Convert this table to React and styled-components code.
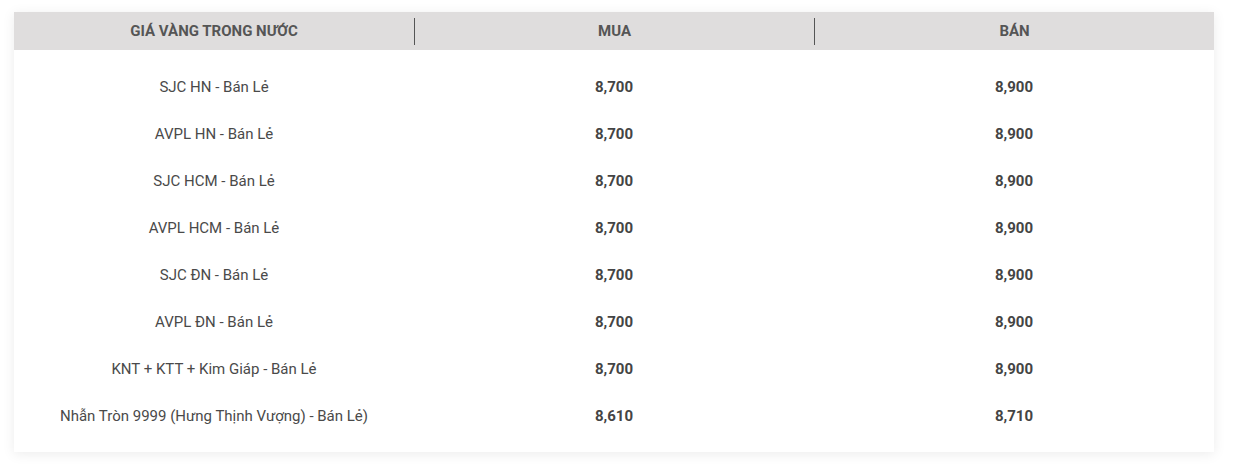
import styled, { createGlobalStyle } from 'styled-components';

const GlobalStyle = createGlobalStyle`
  body {
    margin: 0;
    background: #fff;
    font-family: Roboto, "Liberation Sans", Arial, sans-serif;
  }
`;

const rows = [
  { name: 'SJC HN - Bán Lẻ', buy: '8,700', sell: '8,900' },
  { name: 'AVPL HN - Bán Lẻ', buy: '8,700', sell: '8,900' },
  { name: 'SJC HCM - Bán Lẻ', buy: '8,700', sell: '8,900' },
  { name: 'AVPL HCM - Bán Lẻ', buy: '8,700', sell: '8,900' },
  { name: 'SJC ĐN - Bán Lẻ', buy: '8,700', sell: '8,900' },
  { name: 'AVPL ĐN - Bán Lẻ', buy: '8,700', sell: '8,900' },
  { name: 'KNT + KTT + Kim Giáp - Bán Lẻ', buy: '8,700', sell: '8,900' },
  { name: 'Nhẫn Tròn 9999 (Hưng Thịnh Vượng) - Bán Lẻ)', buy: '8,610', sell: '8,710' },
];

const Page = styled.div`
  padding: 12px 21px 17px 14px;
`;

const Card = styled.div`
  width: 1200px;
  background: #fff;
  box-shadow: 0 2px 12px rgba(0, 0, 0, 0.08);
`;

const HeaderRow = styled.div`
  display: grid;
  grid-template-columns: repeat(3, 400px);
  height: 38px;
  align-items: center;
  background: #dfdddd;
`;

const HeadCell = styled.div`
  height: 27px;
  display: flex;
  align-items: center;
  justify-content: center;
  font-size: 15px;
  font-weight: 700;
  color: #555;
  text-transform: uppercase;
  border-left: ${p => (p.$divider ? '1px solid #555' : 'none')};
`;

const Body = styled.div`
  padding: 13px 0 13px;
`;

const Row = styled.div`
  display: grid;
  grid-template-columns: repeat(3, 400px);
  height: 47px;
  align-items: center;
`;

const Cell = styled.div`
  text-align: center;
  font-size: 15px;
  color: ${p => (p.$bold ? '#444' : '#4a4a4a')};
  font-weight: ${p => (p.$bold ? 700 : 400)};
`;

export default function App() {
  return (
    <Page>
      <GlobalStyle />
      <Card>
        <HeaderRow>
          <HeadCell>Giá vàng trong nước</HeadCell>
          <HeadCell $divider>Mua</HeadCell>
          <HeadCell $divider>Bán</HeadCell>
        </HeaderRow>
        <Body>
          {rows.map(r => (
            <Row key={r.name}>
              <Cell>{r.name}</Cell>
              <Cell $bold>{r.buy}</Cell>
              <Cell $bold>{r.sell}</Cell>
            </Row>
          ))}
        </Body>
      </Card>
    </Page>
  );
}
